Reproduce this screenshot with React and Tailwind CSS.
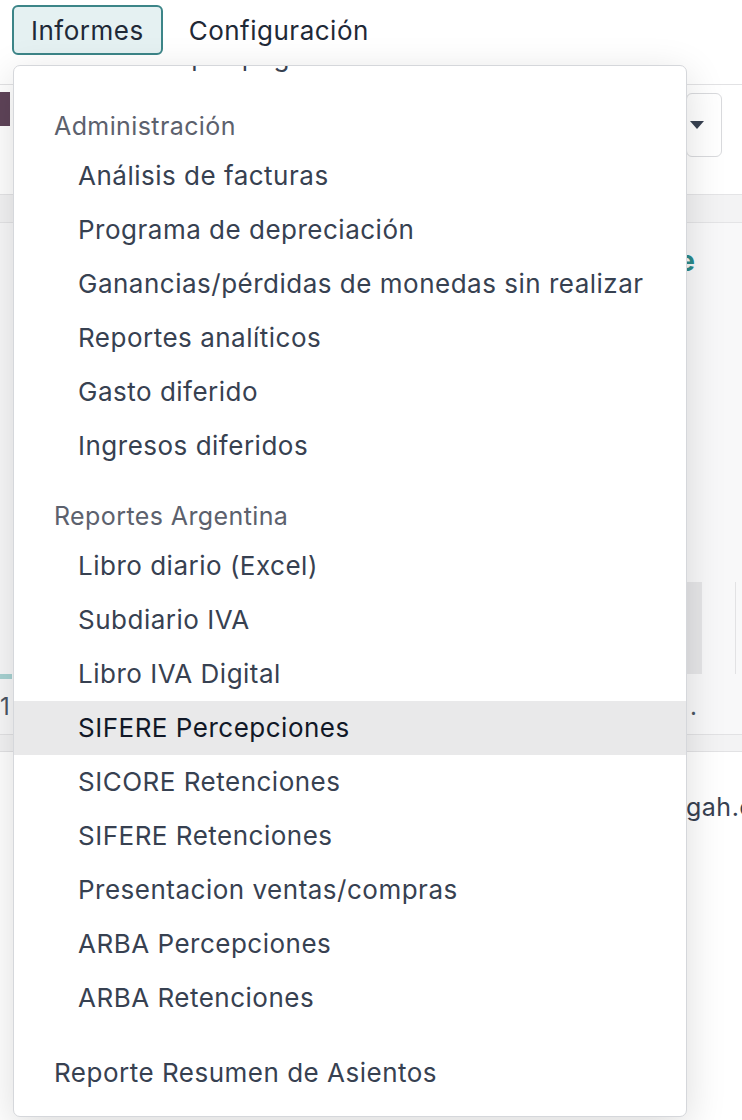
import { Fragment } from 'react';

const font = { fontFamily: 'Inter, "Noto Sans", sans-serif' };

// Menu contents, grouped the way the Informes dropdown shows them
const sections = [
  {
    title: 'Administración',
    items: [
      'Análisis de facturas',
      'Programa de depreciación',
      'Ganancias/pérdidas de monedas sin realizar',
      'Reportes analíticos',
      'Gasto diferido',
      'Ingresos diferidos',
    ],
  },
  {
    title: 'Reportes Argentina',
    items: [
      'Libro diario (Excel)',
      'Subdiario IVA',
      'Libro IVA Digital',
      'SIFERE Percepciones',
      'SICORE Retenciones',
      'SIFERE Retenciones',
      'Presentacion ventas/compras',
      'ARBA Percepciones',
      'ARBA Retenciones',
    ],
  },
];

const active = 'SIFERE Percepciones';

function MenuItem({ label }) {
  const isActive = label === active;
  return (
    <div
      className={`h-[54px] flex items-center pl-[64px] pb-[2px] text-[26px] tracking-[0.5px] ${
        isActive ? 'bg-[#e9e9ea] text-[#111827]' : 'text-[#374151]'
      }`}
    >
      {label}
    </div>
  );
}

function Background() {
  return (
    <div className="w-full bg-[#f8f8f9]">
      {/* control panel */}
      <div className="h-[24px] bg-white" />
      <div className="h-[110px] bg-white border-t border-[#e2e2e4] flex">
        <div className="w-[10px] mt-[7px] h-[34px] bg-[#5f4459]" />
        <div className="flex-1" />
        <div className="w-[36px] mt-[8px] h-[64px] border border-[#d9dadd] rounded-[6px] mr-[20px] flex items-center">
          <span className="ml-[3px] w-0 h-0 border-l-[7px] border-r-[7px] border-t-[8px] border-l-transparent border-r-transparent border-t-[#374151]" />
        </div>
      </div>
      <div className="h-[28px] bg-[#f3f3f4] border-t border-[#e4e4e6]" />
      <div className="h-[360px] border-t border-[#e4e4e6] flex justify-end">
        <span className="mt-[17px] mr-[47px] text-[28px] text-[#2b8a8a] font-bold">e</span>
      </div>
      <div className="h-[92px] flex justify-end">
        <div className="w-[23px] bg-[#e6e6e8] mr-[33px]" />
        <div className="w-px bg-[#e2e2e4] mr-[6px]" />
      </div>
      <div className="h-[5px] bg-[#a8d3d3] w-[12px]" />
      <div className="h-[55px] flex items-center justify-between text-[24px] text-[#4b5563]">
        <span>1</span>
        <span className="mr-[45px]">.</span>
      </div>
      <div className="h-[18px] bg-[#f3f3f4] border-y border-[#e2e2e4]" />
      <div className="h-[370px] bg-white overflow-hidden">
        <div className="mt-[37px] ml-[686px] text-[25px] text-[#374151] whitespace-nowrap tracking-[0.5px]">
          gah.com
        </div>
      </div>
      <div className="h-[16px] bg-white flex">
        <div className="ml-[248px] w-[104px] bg-[#d9cdd7]" />
        <div className="ml-[60px] w-[270px] bg-[#d9cdd7]" />
      </div>
    </div>
  );
}

export default function App() {
  return (
    <div className="relative w-[742px] h-[1120px] overflow-hidden bg-white" style={font}>
      {/* Top menu */}
      <div className="h-[60px] bg-white flex items-start pt-[5px] pl-[12px] gap-[2px] relative z-10">
        <button className="h-[50px] px-[17px] rounded-[6px] border-2 border-[#3c8588] bg-[#e5f1f2] text-[26px] tracking-[0.5px] text-[#1f2937]">
          Informes
        </button>
        <button className="h-[50px] px-[24px] text-[26px] tracking-[0.5px] text-[#1f2937]">Configuración</button>
      </div>

      <Background />

      {/* Dropdown */}
      <div className="absolute left-[13px] top-[65px] w-[674px] h-[1052px] bg-white border border-[#d5d7db] rounded-[7px] shadow-[0_10px_40px_rgba(0,0,0,0.14)] overflow-hidden z-20">
        <div className="mt-[-37px]">
          <div className="h-[54px] flex items-center pl-[64px] text-[26px] tracking-[0.5px] text-[#374151]">
            Cuentas por pagar
          </div>
          {sections.map((s) => (
            <Fragment key={s.title}>
              <div className="h-[46px] mt-[20px] flex items-center pl-[40px] pt-[2px] text-[25px] tracking-[0.4px] text-[#5c616d]">
                {s.title}
              </div>
              {s.items.map((item) => (
                <MenuItem key={item} label={item} />
              ))}
            </Fragment>
          ))}
          <div className="h-[54px] mt-[21px] flex items-center pl-[40px] pb-[2px] text-[26px] tracking-[0.5px] text-[#374151]">
            Reporte Resumen de Asientos
          </div>
        </div>
      </div>
    </div>
  );
}
